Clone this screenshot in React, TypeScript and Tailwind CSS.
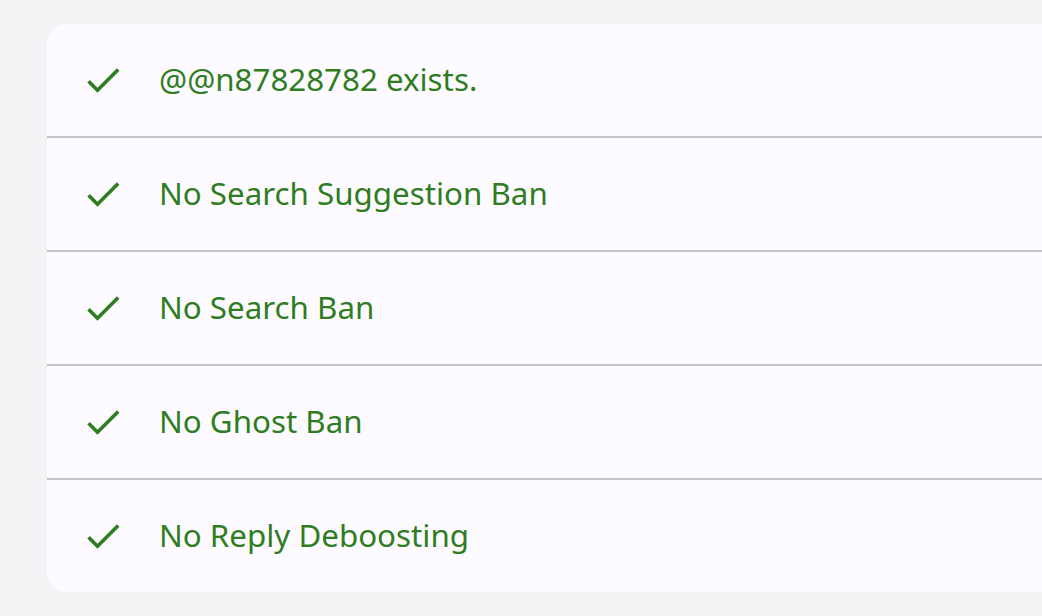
const checks = [
  "@@n87828782 exists.",
  "No Search Suggestion Ban",
  "No Search Ban",
  "No Ghost Ban",
  "No Reply Deboosting",
];

function CheckIcon() {
  return (
    <svg viewBox="0 0 24 24" className="h-[44px] w-[44px] shrink-0" fill="currentColor">
      <path d="M9 16.17L4.83 12l-1.42 1.41L9 19 21 7l-1.41-1.41z" />
    </svg>
  );
}

export default function App() {
  return (
    <div className="h-[616px] w-full overflow-hidden bg-[#f2f3f5] pl-[47px] pt-[24px]">
      <div
        className="w-[1060px] overflow-hidden rounded-[20px] bg-[#fdfbff] text-[#2f7d22]"
        style={{ fontFamily: '"Noto Sans", "Open Sans", sans-serif' }}
      >
        {checks.map((label, i) => (
          <div
            key={label}
            className={
              i < checks.length - 1
                ? "flex h-[114px] items-center gap-[34px] border-b-2 border-[#c4c4c6] pl-[34px]"
                : "flex h-[112px] items-center gap-[34px] pl-[34px]"
            }
          >
            <CheckIcon />
            <span className="text-[31.3px] leading-none">{label}</span>
          </div>
        ))}
      </div>
    </div>
  );
}
